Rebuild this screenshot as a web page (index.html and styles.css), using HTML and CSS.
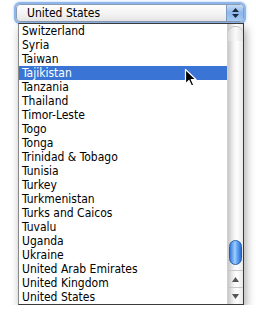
FILE: index.html
```html
<!DOCTYPE html>
<html lang="en">
<head>
  <meta charset="UTF-8">
  <link rel="stylesheet" href="styles.css">
  <title>Country Select</title>
</head>
<body>
  <div class="popup">
    <div class="select">
      <span class="select-value">United States</span>
      <span class="select-arrows">
        <svg width="7" height="10" viewBox="0 0 7 10"><path d="M3.5 0 L7 4 L0 4 Z M0 6 L7 6 L3.5 10 Z" fill="#1a2a40"/></svg>
      </span>
    </div>

    <div class="list">
      <ul class="options">
        <li>Switzerland</li>
        <li>Syria</li>
        <li>Taiwan</li>
        <li class="selected">Tajikistan</li>
        <li>Tanzania</li>
        <li>Thailand</li>
        <li>Timor-Leste</li>
        <li>Togo</li>
        <li>Tonga</li>
        <li>Trinidad &amp; Tobago</li>
        <li>Tunisia</li>
        <li>Turkey</li>
        <li>Turkmenistan</li>
        <li>Turks and Caicos</li>
        <li>Tuvalu</li>
        <li>Uganda</li>
        <li>Ukraine</li>
        <li>United Arab Emirates</li>
        <li>United Kingdom</li>
        <li>United States</li>
      </ul>
      <div class="scrollbar">
        <div class="track">
          <div class="track-cap"></div>
          <div class="thumb"></div>
        </div>
        <div class="arrow-btn">
          <svg width="7" height="5" viewBox="0 0 7 5"><path d="M3.5 0 L7 5 L0 5 Z" fill="#555"/></svg>
        </div>
        <div class="arrow-btn">
          <svg width="7" height="5" viewBox="0 0 7 5"><path d="M0 0 L7 0 L3.5 5 Z" fill="#555"/></svg>
        </div>
      </div>
    </div>

    <svg class="cursor" width="13" height="20" viewBox="0 0 13 20">
      <path d="M1.5 1.5 L1.5 16 L5 12.5 L7.5 18 L9.8 17 L7.3 11.5 L12 11.5 Z" fill="#000" stroke="#fff" stroke-width="1.2" stroke-linejoin="round"/>
    </svg>
  </div>
</body>
</html>
```

FILE: styles.css
```css
body {
  margin: 0;
  background-color: #ffffff;
  font-family: "DejaVu Sans Condensed", "DejaVu Sans", sans-serif;
  font-stretch: condensed;
  font-size: 12px;
  color: #000;
}

.popup {
  position: relative;
  padding: 4px 0 0 16px;
}

.select {
  width: 226px;
  height: 16px;
  display: flex;
  align-items: center;
  border: 1px solid #8a9bb5;
  border-radius: 4px;
  box-shadow: 0 0 0 2px #8fb6e8, 0 0 3px 2px #aaccf2;
  background: linear-gradient(#ffffff, #e8e8e8);
  overflow: hidden;
}

.select-value {
  flex: 1;
  padding-left: 10px;
  line-height: 16px;
}

.select-arrows {
  width: 16px;
  height: 16px;
  display: flex;
  align-items: center;
  justify-content: center;
  border-left: 1px solid #7f9cc4;
  background: linear-gradient(#c7dcf6, #8db6ea 50%, #a8cbf3);
}

.list {
  width: 224px;
  height: 280px;
  margin: 1px 0 0 2px;
  display: flex;
  border: 1px solid #3a3a3a;
  border-left-color: #888;
  box-shadow: 2px 5px 9px rgba(0, 0, 0, 0.35);
  background-color: #fff;
}

.options {
  flex: 1;
  list-style: none;
  margin: 0;
  padding: 0;
}

.options li {
  height: 14px;
  line-height: 14px;
  padding-left: 3px;
  white-space: nowrap;
}

.options li.selected {
  background-color: #3a74d4;
  color: #fff;
}

.scrollbar {
  width: 15px;
  display: flex;
  flex-direction: column;
  border-left: 1px solid #d0d0d0;
  background: linear-gradient(90deg, #c8c8c8, #f4f4f4 40%, #ffffff 60%, #e6e6e6);
}

.track {
  flex: 1;
  position: relative;
}

.track-cap {
  height: 14px;
  margin-top: 3px;
  border-radius: 7px 7px 0 0;
  background: linear-gradient(90deg, #d8d8d8, #fafafa 50%, #e2e2e2);
  box-shadow: 0 -1px 0 #bbb;
}

.thumb {
  position: absolute;
  left: 1px;
  right: 1px;
  top: 216px;
  height: 23px;
  border-radius: 7px;
  border: 1px solid #2a5fa8;
  background: linear-gradient(90deg, #3a78d8, #9ed0ff 45%, #6fb0f8 60%, #2c6ad0);
}

.arrow-btn {
  height: 16px;
  display: flex;
  align-items: center;
  justify-content: center;
  border-top: 1px solid #c8c8c8;
}

.cursor {
  position: absolute;
  left: 184px;
  top: 68px;
}
```
